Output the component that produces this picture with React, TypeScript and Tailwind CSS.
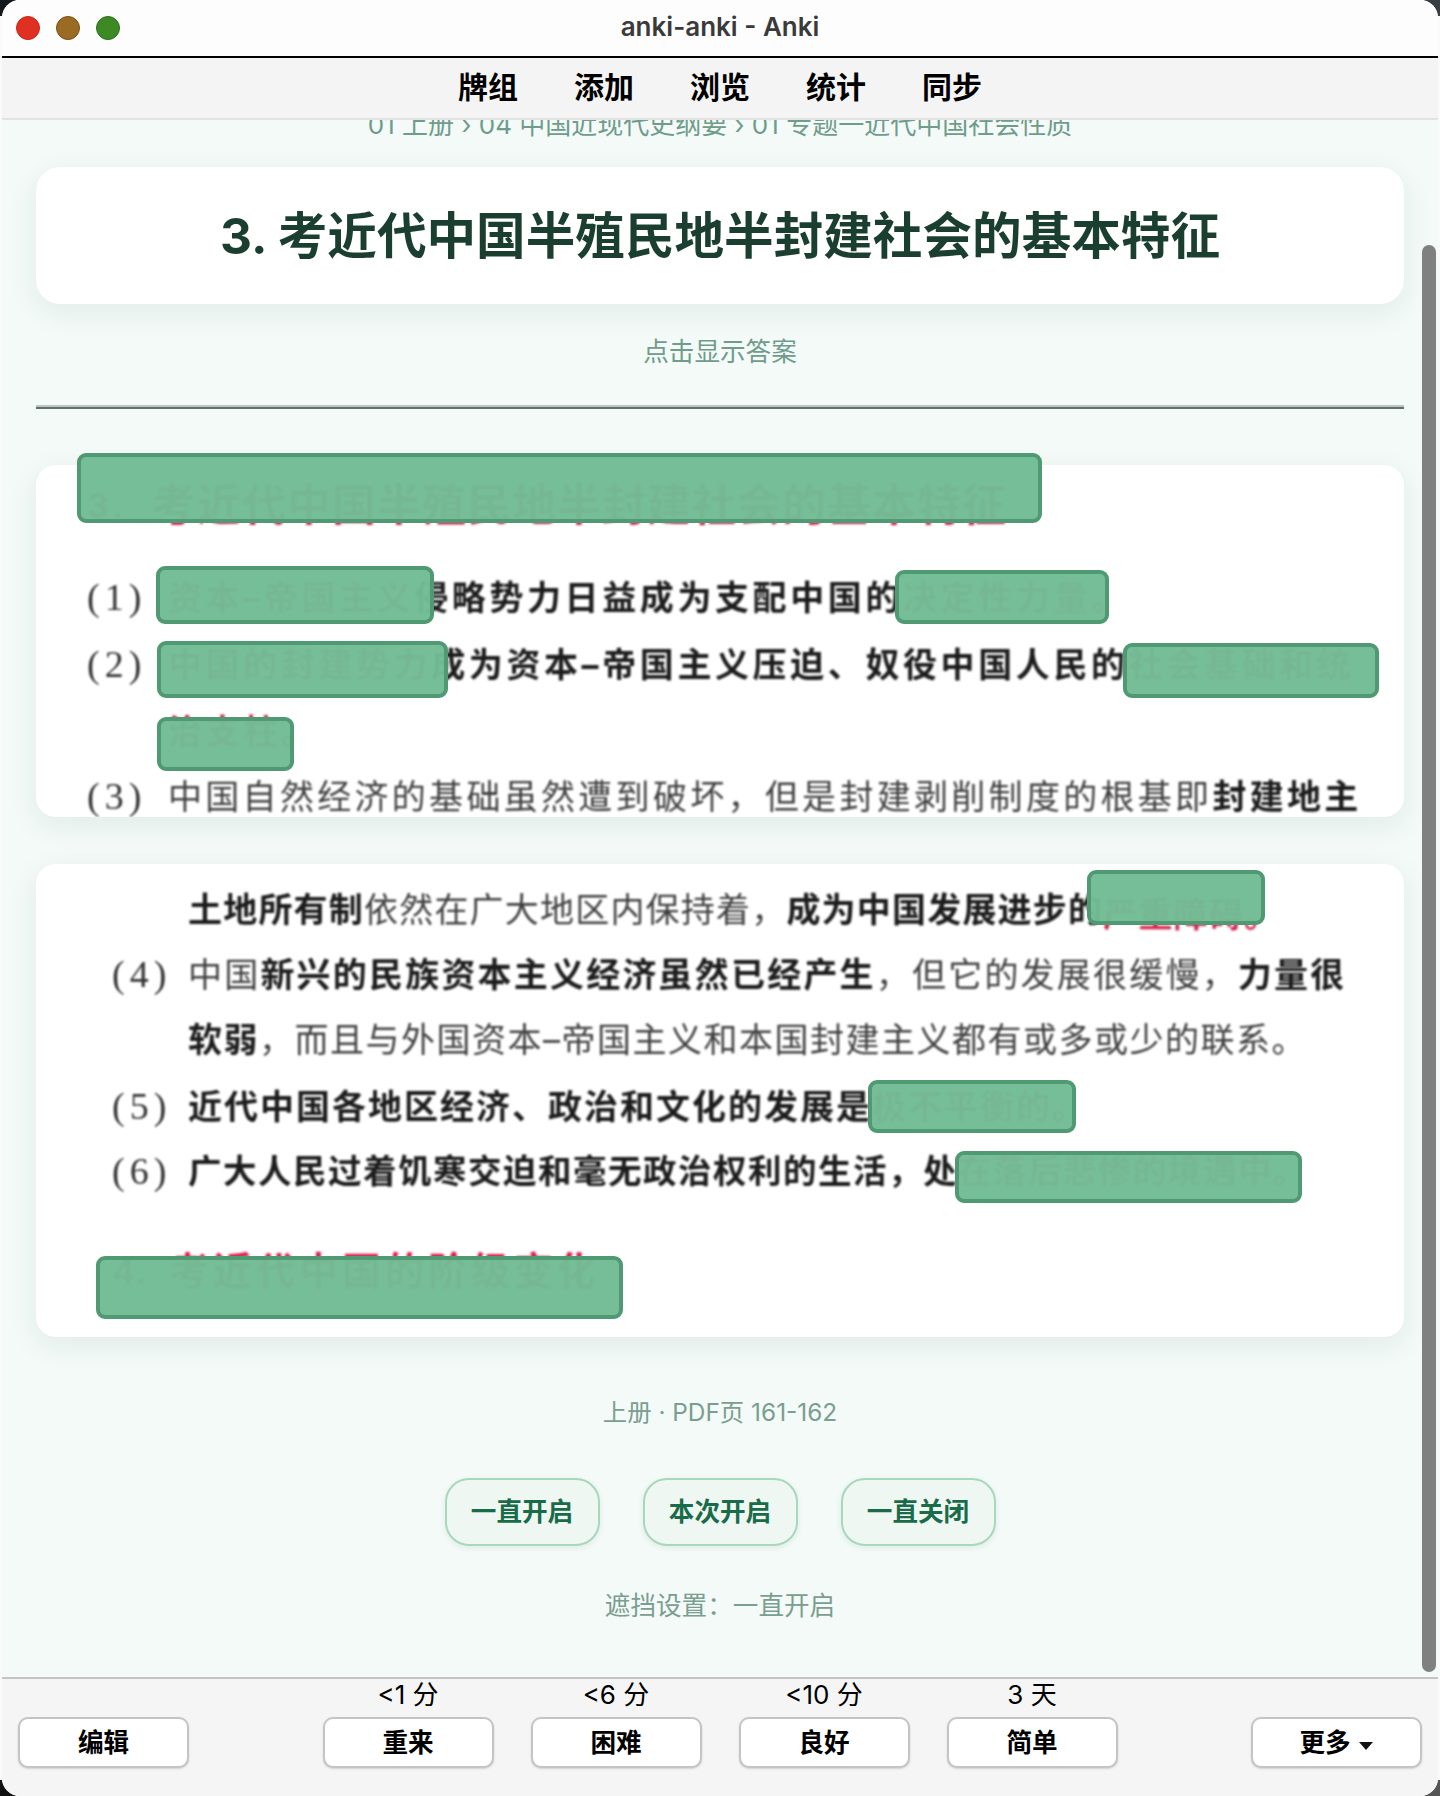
import { ReactNode } from 'react';

const CJK = "Inter, 'Noto Sans CJK SC', sans-serif";
const COMMA = '\uFF0C';
const COLON = '\uFF1A';

function Mask({ className }: { className: string }) {
    return <div className={`absolute rounded-[9px] border-[4px] border-[#4f9a73] bg-[#72bc95]/[0.97] ${className}`} />;
}

function Num({ width, children }: { width: string; children?: ReactNode }) {
    return (
        <span className={`shrink-0 font-['Liberation_Serif'] text-[38px] tracking-[5px] text-[#333] ${width}`}>
            {children}
        </span>
    );
}

function Line({ num, height, children }: { num?: string; height: string; children: ReactNode }) {
    return (
        <div className={`flex items-center whitespace-nowrap ${height}`}>
            <Num width="w-[81px]">{num}</Num>
            <span>{children}</span>
        </div>
    );
}

const B = ({ children }: { children: ReactNode }) => <b className="font-bold text-[#1c1c1c]">{children}</b>;
const R = ({ children }: { children: ReactNode }) => <b className="font-bold text-[#d9234f]">{children}</b>;

function ScanCard({ height, children, masks }: { height: string; children: ReactNode; masks: ReactNode }) {
    return (
        <div className={`relative ${height}`}>
            <div className="h-full overflow-hidden rounded-[20px] bg-white shadow-[0_8px_30px_rgba(26,63,49,0.08)]">
                {children}
            </div>
            {masks}
        </div>
    );
}

function BarButton({ children }: { children: ReactNode }) {
    return (
        <button className="flex h-[51px] w-[171px] items-center justify-center rounded-[10px] border-2 border-[#c4c4c4] bg-white pt-[2px] text-[25.6px] font-semibold text-black shadow-[0_1px_2px_rgba(0,0,0,0.15)]">
            {children}
        </button>
    );
}

function Answer({ label, time }: { label: string; time: string }) {
    return (
        <div className="flex flex-col items-center">
            <div className="flex h-[38px] items-center pb-[7px] text-[26px] leading-none text-black">{time}</div>
            <BarButton>{label}</BarButton>
        </div>
    );
}

function ToggleButton({ children }: { children: ReactNode }) {
    return (
        <button className="flex h-[68px] w-[155px] items-center justify-center rounded-[24px] border-2 border-[#a8d8bb] bg-[#eef7f2] pt-[1px] text-[25.6px] font-semibold text-[#1a6b4a] shadow-[0_2px_6px_rgba(26,63,49,0.08)]">
            {children}
        </button>
    );
}

export default function App() {
    return (
        <div className="relative h-[1796px] w-[1440px] overflow-hidden bg-[#fafafa]" style={{ fontFamily: CJK }}>
            {/* Desktop showing through the window's round corners */}
            <div className="absolute left-0 top-0 size-[16px] bg-[#15181c]" />
            <div className="absolute right-0 top-0 size-[16px] bg-[#3a3d42]" />
            <div className="absolute bottom-0 left-0 size-[16px] bg-[#111]" />
            <div className="absolute bottom-0 right-0 size-[16px] bg-[#555]" />

            <div className="relative mx-[2px] flex h-[1796px] flex-col overflow-hidden rounded-[18px] bg-white">
                {/* Title bar */}
                <div className="relative flex h-[58px] shrink-0 items-center justify-center border-b-2 border-black bg-[#fdfdfd] pb-[3px]">
                    <div className="absolute left-[14px] top-[16px] flex gap-[16px]">
                        <div className="size-[24px] rounded-full border border-[#c4281a] bg-[#e03022]" />
                        <div className="size-[24px] rounded-full border border-[#7a5216] bg-[#996b23]" />
                        <div className="size-[24px] rounded-full border border-[#2e6f1c] bg-[#3d8a24]" />
                    </div>
                    <span className="text-[26px] font-semibold text-[#3a3a3a]">anki-anki - Anki</span>
                </div>

                {/* Toolbar */}
                <div className="relative z-10 flex h-[62px] shrink-0 items-center justify-center gap-[56px] border-b-2 border-[#e2e2e2] bg-[#f4f4f4] pb-[2px] text-[30px] font-bold text-black">
                    <span>牌组</span>
                    <span>添加</span>
                    <span>浏览</span>
                    <span>统计</span>
                    <span>同步</span>
                </div>

                {/* Review area */}
                <div className="flex h-[1557px] shrink-0 flex-col bg-[#f3faf7] px-[34px]">
                    <div className="-mt-[15px] h-[40px] text-center text-[26px] leading-[40px] text-[#6f9c8b]">
                        01 上册 › 04 中国近现代史纲要 › 01 专题一近代中国社会性质
                    </div>
                    <div className="mt-[22px] flex h-[137px] items-center justify-center rounded-[24px] bg-white pt-[2px] text-[49.6px] font-bold text-[#1a3f31] shadow-[0_8px_30px_rgba(26,63,49,0.08)]">
                        3. 考近代中国半殖民地半封建社会的基本特征
                    </div>
                    <div className="mt-[28px] h-[40px] text-center text-[25.6px] leading-[40px] text-[#6f9c8b]">
                        点击显示答案
                    </div>
                    <div className="mt-[33px] h-[4px] border-t-2 border-[#b7c9c0] bg-[#666c69]" />

                    <div className="mt-[56px]">
                        <ScanCard
                            height="h-[352px]"
                            masks={
                                <>
                                    <Mask className="left-[41px] top-[-12px] h-[70px] w-[965px]" />
                                    <Mask className="left-[120px] top-[101px] h-[58px] w-[278px]" />
                                    <Mask className="left-[859px] top-[105px] h-[54px] w-[214px]" />
                                    <Mask className="left-[121px] top-[176px] h-[57px] w-[291px]" />
                                    <Mask className="left-[1087px] top-[178px] h-[55px] w-[256px]" />
                                    <Mask className="left-[121px] top-[252px] h-[54px] w-[137px]" />
                                </>
                            }
                        >
                            <div className="pl-[51px] pt-[18px] text-[34px] tracking-[3.6px] text-[#3f3f3f] blur-[0.8px]">
                                <div className="flex h-[44px] items-center whitespace-nowrap text-[#d9234f]">
                                    <span className="w-[65px] font-bold">3.</span>
                                    <span className="text-[44px] font-bold tracking-[1px]">考近代中国半殖民地半封建社会的基本特征</span>
                                </div>
                                <Line num="(1)" height="mt-[48px] h-[44px]">
                                    <R>资本–帝国主义</R>
                                    <B>侵略势力日益成为支配中国的</B>
                                    <R>决定性力量。</R>
                                </Line>
                                <Line num="(2)" height="mt-[23px] h-[44px]">
                                    <R>中国的封建势力</R>
                                    <B>成为资本–帝国主义压迫、奴役中国人民的</B>
                                    <R>社会基础和统</R>
                                </Line>
                                <Line height="mt-[23px] h-[44px]">
                                    <R>治支柱。</R>
                                </Line>
                                <Line num="(3)" height="mt-[21px] h-[44px]">
                                    <span className="tracking-[3.3px]">
                                        中国自然经济的基础虽然遭到破坏{COMMA}但是封建剥削制度的根基即<B>封建地主</B>
                                    </span>
                                </Line>
                            </div>
                        </ScanCard>
                    </div>

                    <div className="mt-[47px]">
                        <ScanCard
                            height="h-[473px]"
                            masks={
                                <>
                                    <Mask className="left-[1051px] top-[6px] h-[55px] w-[178px]" />
                                    <Mask className="left-[832px] top-[216px] h-[53px] w-[208px]" />
                                    <Mask className="left-[919px] top-[287px] h-[52px] w-[347px]" />
                                    <Mask className="left-[60px] top-[392px] h-[63px] w-[527px]" />
                                </>
                            }
                        >
                            <div className="pl-[76px] pt-[23px] text-[34px] tracking-[2px] text-[#3f3f3f] blur-[0.8px]">
                                <div className="flex h-[44px] items-center whitespace-nowrap pl-[76px] tracking-[1.2px]">
                                    <span>
                                        <B>土地所有制</B>依然在广大地区内保持着{COMMA}<B>成为中国发展进步的</B>
                                        <span className="inline-block translate-y-[5px]"><R>严重障碍。</R></span>
                                    </span>
                                </div>
                                <div className="mt-[21px] flex h-[44px] items-center whitespace-nowrap">
                                    <Num width="w-[76px]">(4)</Num>
                                    <span className="tracking-[2.2px]">中国<B>新兴的民族资本主义经济虽然已经产生</B>{COMMA}但它的发展很缓慢{COMMA}<B>力量很</B></span>
                                </div>
                                <div className="mt-[21px] flex h-[44px] items-center whitespace-nowrap pl-[76px] tracking-[1.5px]">
                                    <span><B>软弱</B>{COMMA}而且与外国资本–帝国主义和本国封建主义都有或多或少的联系。</span>
                                </div>
                                <div className="mt-[23px] flex h-[44px] items-center whitespace-nowrap">
                                    <Num width="w-[76px]">(5)</Num>
                                    <span><B>近代中国各地区经济、政治和文化的发展是</B><R>极不平衡的。</R></span>
                                </div>
                                <div className="mt-[21px] flex h-[44px] items-center whitespace-nowrap">
                                    <Num width="w-[76px]">(6)</Num>
                                    <span className="text-[33.5px] tracking-[1.5px]"><B>广大人民过着饥寒交迫和毫无政治权利的生活{COMMA}处</B><R>在落后悲惨的境遇中。</R></span>
                                </div>
                                <div className="mt-[56px] flex h-[44px] items-center whitespace-nowrap text-[#d9234f]">
                                    <span className="w-[58px] font-bold">4.</span>
                                    <span className="text-[39px] font-bold tracking-[4px]">考近代中国的阶级变化</span>
                                </div>
                            </div>
                        </ScanCard>
                    </div>

                    <div className="mt-[58px] h-[34px] text-center text-[24.4px] leading-[34px] text-[#7a9e90]">
                        上册 · PDF页 161-162
                    </div>
                    <div className="mt-[49px] flex justify-center gap-[43px]">
                        <ToggleButton>一直开启</ToggleButton>
                        <ToggleButton>本次开启</ToggleButton>
                        <ToggleButton>一直关闭</ToggleButton>
                    </div>
                    <div className="mt-[42px] h-[36px] text-center text-[25.6px] leading-[36px] text-[#7a9e90]">
                        遮挡设置{COLON}一直开启
                    </div>
                </div>

                {/* Answer bar */}
                <div className="flex h-[119px] shrink-0 items-start justify-between border-t-2 border-[#c4c4c4] bg-[#f5f5f5] px-[16px]">
                    <div className="mt-[38px]">
                        <BarButton>编辑</BarButton>
                    </div>
                    <div className="flex gap-[37px]">
                        <Answer label="重来" time="<1 分" />
                        <Answer label="困难" time="<6 分" />
                        <Answer label="良好" time="<10 分" />
                        <Answer label="简单" time="3 天" />
                    </div>
                    <div className="mt-[38px]">
                        <BarButton>
                            更多
                            <svg width="16" height="10" viewBox="0 0 16 10" className="ml-[7px] mt-[4px]">
                                <path d="M1 1h14L8 9z" fill="#111" />
                            </svg>
                        </BarButton>
                    </div>
                </div>

                {/* Scrollbar thumb */}
                <div className="absolute right-[2px] top-[245px] h-[1427px] w-[14px] rounded-full bg-[#808080]" />
            </div>
        </div>
    );
}
